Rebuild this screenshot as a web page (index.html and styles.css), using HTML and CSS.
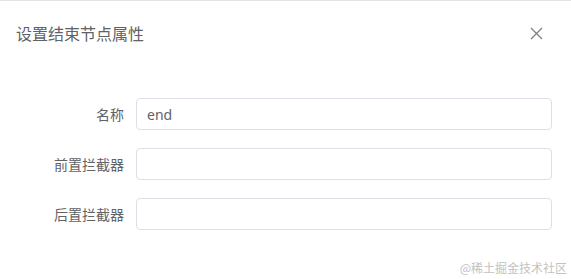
FILE: index.html
```html
<!DOCTYPE html>
<html lang="zh-CN">
<head>
  <meta charset="UTF-8">
  <title>设置结束节点属性</title>
  <link rel="stylesheet" href="styles.css">
</head>
<body>
  <div class="dialog">
    <header class="dialog-header">
      <span class="dialog-title">设置结束节点属性</span>
      <button class="close-btn" aria-label="关闭">
        <svg width="13" height="13" viewBox="0 0 13 13">
          <path d="M1 1 L12 12 M12 1 L1 12" stroke="#7d8088" stroke-width="1.3" fill="none"/>
        </svg>
      </button>
    </header>
    <form class="dialog-body">
      <div class="form-item">
        <label class="form-label">名称</label>
        <input class="form-input" type="text" value="end">
      </div>
      <div class="form-item">
        <label class="form-label">前置拦截器</label>
        <input class="form-input" type="text">
      </div>
      <div class="form-item">
        <label class="form-label">后置拦截器</label>
        <input class="form-input" type="text">
      </div>
    </form>
  </div>
  <div class="watermark">@稀土掘金技术社区</div>
</body>
</html>
```

FILE: styles.css
```css
body {
  margin: 0;
  background-color: #ffffff;
  font-family: "Noto Sans CJK SC", "Noto Sans", sans-serif;
  color: #606266;
}
.dialog {
  border-top: 1px solid #e3e3e3;
  height: 278px;
}
.dialog-header {
  display: flex;
  align-items: center;
  justify-content: space-between;
  padding: 20px 28px 12px 16px;
}
.dialog-title {
  font-size: 16px;
  line-height: 24px;
  color: #606266;
}
.close-btn {
  border: none;
  background: none;
  padding: 0;
  width: 13px;
  height: 13px;
  display: flex;
  cursor: pointer;
}
.dialog-body {
  padding: 41px 19px 0 16px;
  margin: 0;
}
.form-item {
  display: flex;
  align-items: center;
  margin-bottom: 18px;
}
.form-label {
  width: 108px;
  padding-right: 12px;
  text-align: right;
  font-size: 14px;
  color: #606266;
}
.form-input {
  flex: 1;
  height: 32px;
  box-sizing: border-box;
  border: 1px solid #dcdfe6;
  border-radius: 4px;
  padding: 0 10px;
  font-family: "Noto Sans", "Noto Sans CJK SC", sans-serif;
  font-size: 14px;
  color: #606266;
  outline: none;
}
.watermark {
  position: absolute;
  right: 4px;
  bottom: 3px;
  font-size: 12px;
  color: #c2c2c2;
  font-family: "Noto Sans CJK SC", sans-serif;
}
```
